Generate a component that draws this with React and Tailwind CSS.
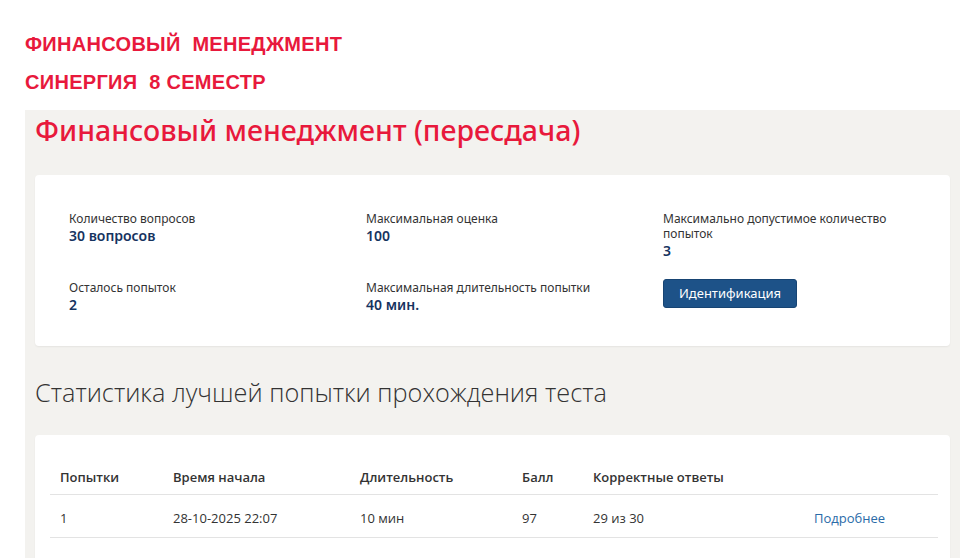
export default function App() {
  const info = [
    { label: 'Количество вопросов', value: '30 вопросов' },
    { label: 'Максимальная оценка', value: '100' },
    { label: 'Максимально допустимое количество попыток', value: '3' },
    { label: 'Осталось попыток', value: '2' },
    { label: 'Максимальная длительность попытки', value: '40 мин.' },
  ];

  return (
    <div className="min-h-screen bg-white overflow-hidden">
      {/* Header captions */}
      <div className="pl-[25px] pt-[32px] font-['Liberation_Sans',Arial,sans-serif] font-bold text-[20px] tracking-[0.3px] text-[#e8193c] leading-[24px]">
        <div>ФИНАНСОВЫЙ&nbsp; МЕНЕДЖМЕНТ</div>
        <div className="mt-[14px]">СИНЕРГИЯ&nbsp; 8 СЕМЕСТР</div>
      </div>

      <div className="ml-[25px] mr-[11px] mt-[16px] bg-[#f3f2ef] px-[10px] pb-10">
        <h1 className="pt-[1px] font-['Noto_Sans',sans-serif] font-medium text-[28.5px] leading-[38px] text-[#e8193c]">
          Финансовый менеджмент (пересдача)
        </h1>

        {/* Test info card */}
        <div className="mt-[26px] bg-white rounded-[4px] shadow-[0_1px_2px_rgba(0,0,0,0.06)] h-[171px] pl-[34px] pt-[36px] font-['Noto_Sans',sans-serif]">
          <div className="grid grid-cols-[297px_297px_240px]">
            {info.slice(0, 3).map((it) => (
              <div key={it.label} className="h-[69px]">
                <div className="text-[12px] leading-[15px] text-[#333]">{it.label}</div>
                <div className="text-[14px] leading-[19px] font-semibold text-[#16335f]">{it.value}</div>
              </div>
            ))}
            {info.slice(3).map((it) => (
              <div key={it.label}>
                <div className="text-[12px] leading-[15px] text-[#333]">{it.label}</div>
                <div className="text-[14px] leading-[19px] font-semibold text-[#16335f]">{it.value}</div>
              </div>
            ))}
            <div className="-mt-[1px]">
              <button
                type="button"
                className="h-[29px] px-[15px] rounded-[3px] bg-[#1d5288] text-white text-[13px] leading-[17px] border border-[#174473]"
              >
                Идентификация
              </button>
            </div>
          </div>
        </div>

        <h2 className="mt-[28px] font-['Open_Sans',sans-serif] font-light text-[25.3px] leading-[36px] text-[#333]">
          Статистика лучшей попытки прохождения теста
        </h2>

        {/* Best attempt table */}
        <div className="mt-[25px] bg-white rounded-[4px] shadow-[0_1px_2px_rgba(0,0,0,0.06)] px-[15px] pt-[26px] pb-10 font-['Open_Sans',sans-serif] text-[13px] leading-[16px] text-[#333]">
          <table className="w-[888px] border-collapse">
            <thead>
              <tr className="border-b border-[#e3e3e3]">
                <th className="text-left font-semibold pt-[8px] pb-[9px] pl-[10px] w-[123px]">Попытки</th>
                <th className="text-left font-semibold pt-[8px] pb-[9px] w-[187px]">Время начала</th>
                <th className="text-left font-semibold pt-[8px] pb-[9px] w-[162px]">Длительность</th>
                <th className="text-left font-semibold pt-[8px] pb-[9px] w-[71px]">Балл</th>
                <th className="text-left font-semibold pt-[8px] pb-[9px] w-[221px]">Корректные ответы</th>
                <th className="pt-[8px] pb-[9px]"></th>
              </tr>
            </thead>
            <tbody>
              <tr className="border-b border-[#e3e3e3]">
                <td className="pt-[15px] pb-[11px] pl-[10px]">1</td>
                <td className="pt-[15px] pb-[11px]">28-10-2025 22:07</td>
                <td className="pt-[15px] pb-[11px]">10 мин</td>
                <td className="pt-[15px] pb-[11px]">97</td>
                <td className="pt-[15px] pb-[11px]">29 из 30</td>
                <td className="pt-[15px] pb-[11px] text-[#2a6ba8]">Подробнее</td>
              </tr>
            </tbody>
          </table>
        </div>
      </div>
    </div>
  );
}
